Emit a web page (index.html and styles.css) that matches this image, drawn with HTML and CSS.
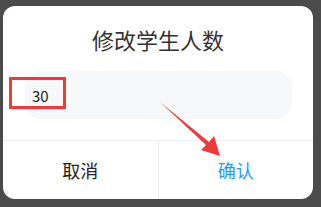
FILE: index.html
```html
<!DOCTYPE html>
<html lang="zh-CN">
<head>
    <meta charset="UTF-8">
    <title>修改学生人数</title>
    <link rel="stylesheet" href="styles.css">
</head>
<body>
    <div class="dialog">
        <!-- 标题 -->
        <div class="dialog-title">修改学生人数</div>

        <!-- 输入框 -->
        <div class="field">
            <div class="field-value">30</div>
        </div>

        <!-- 底部按钮 -->
        <div class="dialog-footer">
            <div class="footer-btn cancel">取消</div>
            <div class="footer-btn confirm">确认</div>
        </div>
    </div>

    <!-- 标注 -->
    <div class="mark-box"></div>
    <svg class="mark-arrow" width="321" height="207" viewBox="0 0 321 207">
        <polygon points="160,102 209,142 214,136 220,156 201,150 206,145" fill="#f03a3a"/>
    </svg>
</body>
</html>
```

FILE: styles.css
```css
* {
    margin: 0;
    padding: 0;
    box-sizing: border-box;
}

body {
    font-family: "Noto Sans CJK SC", "Noto Sans", sans-serif;
    background-color: #4b4b4b;
    width: 321px;
    height: 207px;
    overflow: hidden;
    position: relative;
    padding: 6px 0 0 3px;
}

/* 弹窗 */
.dialog {
    width: 310px;
    height: 193px;
    background-color: #ffffff;
    border-radius: 12px;
    display: flex;
    flex-direction: column;
    overflow: hidden;
}

.dialog-title {
    padding-top: 21px;
    font-size: 22px;
    line-height: 24px;
    color: #333333;
    text-align: center;
}

.field {
    margin: 20px 21px 0 22px;
    height: 48px;
    border-radius: 16px;
    background-color: #f7f8fa;
    display: flex;
    align-items: center;
    padding-left: 7px;
}

.field-value {
    font-size: 15px;
    color: #222222;
}

.dialog-footer {
    margin-top: 21px;
    flex: 1;
    display: flex;
    border-top: 1px solid #ebedf0;
}

.footer-btn {
    flex: 1;
    display: flex;
    align-items: center;
    justify-content: center;
    font-size: 18px;
}

.footer-btn.cancel {
    color: #222222;
    border-right: 1px solid #ebedf0;
}

.footer-btn.confirm {
    color: #1c9cf6;
}

/* 标注层 */
.mark-box {
    position: absolute;
    left: 9px;
    top: 77px;
    width: 57px;
    height: 32px;
    border: 3px solid #f03a3a;
}

.mark-arrow {
    position: absolute;
    left: 0;
    top: 0;
}
```
